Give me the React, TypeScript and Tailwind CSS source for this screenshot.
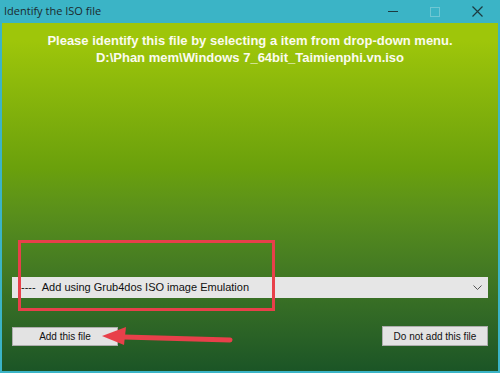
import React from 'react'

function App() {
    return (
        <div className="w-[500px] h-[373px] bg-[#3bb4c6] flex flex-col px-[2px] pb-[2px] overflow-hidden" style={{ fontFamily: '"Liberation Sans", Arial, sans-serif' }}>
            <div className="h-[23px] flex items-center justify-between text-[#1c2a2e]">
                <span className="pl-[2px] text-[11px]" style={{ fontFamily: '"Open Sans", "Liberation Sans", sans-serif' }}>Identify the ISO file</span>
                <div className="flex items-center">
                    <div className="w-[42px] h-[22px] flex items-center justify-center">
                        <div className="w-[10px] h-[1px] bg-[#1c3a40]" />
                    </div>
                    <div className="w-[42px] h-[22px] flex items-center justify-center">
                        <div className="w-[10px] h-[10px] border border-[#6fc7d3]" />
                    </div>
                    <div className="w-[42px] h-[22px] flex items-center justify-center">
                        <svg width="11" height="11" viewBox="0 0 11 11" stroke="#1c3a40" strokeWidth="1.2">
                            <path d="M0.5 0.5 L10.5 10.5 M10.5 0.5 L0.5 10.5" />
                        </svg>
                    </div>
                </div>
            </div>
            <div className="relative flex-1 flex flex-col bg-gradient-to-b from-[#9ec60a] from-5% via-[#6aa00c] via-42% to-[#1b5526]">
                <div className="pt-[9px] text-center text-[#fbfbf0] font-bold text-[13px] leading-[17px]">
                    <div>Please identify this file by selecting a item from drop-down menu.</div>
                    <div>D:\Phan mem\Windows 7_64bit_Taimienphi.vn.iso</div>
                </div>
                <div className="mt-[211px] mx-[10px] h-[21px] bg-[#e6e6e6] flex items-center justify-between pl-[9px] pr-[6px] text-[11px] text-[#111]">
                    <span>----&nbsp;&nbsp;Add using Grub4dos ISO image Emulation</span>
                    <svg width="9" height="6" viewBox="0 0 9 6" fill="none" stroke="#555" strokeWidth="1">
                        <path d="M0.5 0.5 L4.5 4.5 L8.5 0.5" />
                    </svg>
                </div>
                <div className="mt-[29px] mx-[10px] flex justify-between">
                    <div className="w-[106px] h-[19px] bg-[#e3e3e3] border border-[#adadad] flex items-center justify-center text-[10px] text-[#111]">Add this file</div>
                    <div className="w-[106px] h-[20px] bg-[#e3e3e3] border border-[#adadad] flex items-center justify-center text-[10px] text-[#111] -mt-[1px]">Do not add this file</div>
                </div>
                <div className="absolute left-[16px] top-[217px] w-[257px] h-[71px] border-[3px] border-[#e8404a]" />
                <svg className="absolute left-[96px] top-[301px]" width="140" height="24" viewBox="0 0 140 24">
                    <path d="M132 16 L26 13" stroke="#e8404a" strokeWidth="5" strokeLinecap="round" />
                    <path d="M4 12 L28 3 L26 21 Z" fill="#e8404a" />
                </svg>
            </div>
        </div>
    )
}

export default App
